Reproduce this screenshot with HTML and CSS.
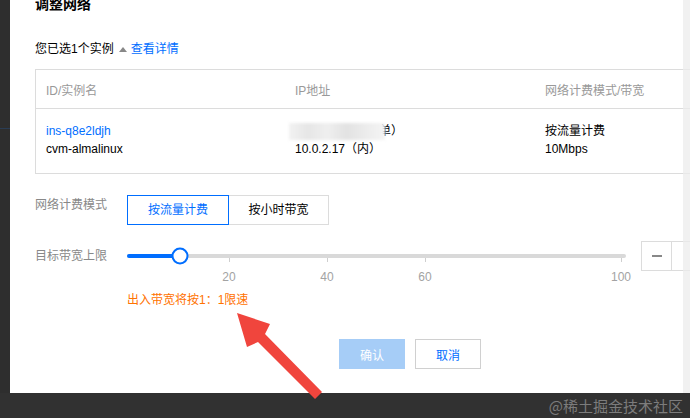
FILE: index.html
```html
<!DOCTYPE html>
<html lang="zh-CN">
<head>
<meta charset="utf-8">
<title>调整网络</title>
<link rel="stylesheet" href="styles.css">
</head>
<body>
<div class="page">
  <div class="main">
    <div class="side"><div class="side-line"></div></div>
    <div class="dialog">
      <h2 class="title">调整网络</h2>
      <div class="selected">您已选1个实例 <svg class="caret" width="8" height="6" viewBox="0 0 8 6"><path d="M0 6 L4 1 L8 6 Z" fill="#888"/></svg> <a class="link">查看详情</a></div>
      <div class="tbl">
        <div class="tr thead">
          <div class="td">ID/实例名</div>
          <div class="td">IP地址</div>
          <div class="td">网络计费模式/带宽</div>
        </div>
        <div class="tr tbody">
          <div class="td"><div class="link">ins-q8e2ldjh</div><div>cvm-almalinux</div></div>
          <div class="td"><div class="ipline"><span class="blur"></span><span class="half">单</span>）</div><div>10.0.2.17（内）</div></div>
          <div class="td"><div>按流量计费</div><div>10Mbps</div></div>
        </div>
      </div>
      <div class="form">
        <div class="frow top">
          <div class="label">网络计费模式</div>
          <div class="seg">
            <div class="seg-btn active">按流量计费</div>
            <div class="seg-btn">按小时带宽</div>
          </div>
        </div>
        <div class="frow mid">
          <div class="label">目标带宽上限</div>
          <div class="slider">
            <div class="track"><div class="fill"></div></div>
            <div class="scale">
              <span class="tick" style="left:20%"></span>
              <span class="tick" style="left:40%"></span>
              <span class="tick" style="left:60%"></span>
              <span class="tick" style="left:100%"></span>
              <span class="mark" style="left:20%">20</span>
              <span class="mark" style="left:40%">40</span>
              <span class="mark" style="left:60%">60</span>
              <span class="mark" style="left:100%">100</span>
              <span class="handle" style="left:10%"></span>
            </div>
          </div>
          <div class="num">
            <div class="num-btn"><span class="minus"></span></div>
            <div class="num-input"></div>
          </div>
        </div>
        <div class="warn">出入带宽将按1：1限速</div>
      </div>
      <div class="footer">
        <button class="btn primary">确认</button>
        <button class="btn">取消</button>
      </div>
    </div>
  </div>
  <div class="bottom"><span class="watermark">@稀土掘金技术社区</span></div>
  <div class="edge"></div>
  <svg class="arrow" width="690" height="418" viewBox="0 0 690 418">
    <polygon points="237,313 270,324 265,334 322,392 315,399 258,342 247,347" fill="#f0453d"/>
  </svg>
</div>
</body>
</html>
```
FILE: styles.css
```css
* { box-sizing: border-box; }
html, body { margin: 0; padding: 0; }
body {
  width: 690px;
  height: 418px;
  overflow: hidden;
  background: #313131;
  font-family: "Liberation Sans", "Noto Sans CJK SC", sans-serif;
  font-size: 12px;
  color: #000;
}
.page {
  position: relative;
  width: 690px;
  height: 418px;
  display: flex;
  flex-direction: column;
  overflow: hidden;
}
.main {
  display: flex;
  height: 393px;
  flex: none;
}
.side {
  width: 10px;
  flex: none;
  background: #2e2e2e;
  padding-top: 128px;
}
.side-line {
  height: 1px;
  background: #2a3d55;
}
.dialog {
  width: 800px;
  flex: none;
  background: #fff;
  padding-left: 25px;
  overflow: hidden;
}
.title {
  margin: -6px 0 0;
  font-size: 14px;
  font-weight: bold;
  line-height: 20px;
  color: #000;
}
.selected {
  margin-top: 25px;
  line-height: 20px;
  color: #000;
  display: flex;
  align-items: center;
  gap: 3px;
}
.caret { margin: 0 1px 0 2px; }
.link { color: #006eff; }
.tbl {
  margin-top: 10px;
  width: 720px;
  border: 1px solid #dcdcdc;
}
.tr {
  display: grid;
  grid-template-columns: 249px 250px 1fr;
}
.thead {
  height: 39px;
  align-items: center;
  border-bottom: 1px solid #dcdcdc;
  color: #999;
}
.tbody {
  height: 64px;
  padding-top: 13px;
  line-height: 18px;
}
.td { padding-left: 10px; }
.ipline { display: flex; align-items: center; height: 18px; }
.blur {
  display: inline-block;
  width: 96px;
  height: 17px;
  margin-left: -6px;
  background: linear-gradient(90deg, #f2f2f2 0%, #e6e6e6 20%, #efefef 40%, #e2e2e2 60%, #ececec 80%, #f4f4f4 100%);
  filter: blur(1.5px);
  position: relative;
  z-index: 1;
}
.half { margin-left: -6px; }
.form { margin-top: 21px; }
.frow {
  display: grid;
  grid-template-columns: 92px auto auto;
  justify-content: start;
}
.frow.top { align-items: start; }
.frow.mid { align-items: center; margin-top: 16px; height: 30px; }
.label { color: #888; line-height: 20px; }
.seg { display: flex; }
.seg-btn {
  height: 30px;
  line-height: 28px;
  text-align: center;
  border: 1px solid #dcdcdc;
  width: 101px;
  margin-left: -1px;
  color: #000;
}
.seg-btn.active {
  width: 102px;
  margin-left: 0;
  border-color: #006eff;
  color: #006eff;
  position: relative;
  z-index: 1;
}
.slider {
  position: relative;
  width: 499px;
  height: 30px;
}
.track {
  margin-top: 13px;
  height: 4px;
  background: #d9d9d9;
  border-radius: 2px;
  overflow: hidden;
}
.fill { width: 53px; height: 4px; background: #006eff; }
.scale {
  position: absolute;
  left: 4px;
  right: 5px;
  top: 0;
  bottom: 0;
}
.tick {
  position: absolute;
  top: 17px;
  width: 1px;
  height: 4px;
  background: #cfcfcf;
}
.mark {
  position: absolute;
  top: 28px;
  line-height: 16px;
  transform: translateX(-50%);
  color: #a3a3a3;
}
.handle {
  position: absolute;
  top: 15px;
  width: 17px;
  height: 17px;
  border: 2px solid #006eff;
  border-radius: 50%;
  background: #fff;
  transform: translate(-50%, -50%);
}
.num {
  margin-left: 15px;
  display: flex;
  height: 30px;
  border: 1px solid #dcdcdc;
}
.num-btn {
  width: 30px;
  border-right: 1px solid #dcdcdc;
  display: flex;
  align-items: center;
  justify-content: center;
}
.minus { width: 10px; height: 2px; background: #888; }
.num-input { width: 60px; }
.warn {
  margin-top: 19px;
  margin-left: 92px;
  line-height: 20px;
  color: #ff7200;
}
.footer {
  margin-top: 29px;
  margin-left: 304px;
  display: flex;
  gap: 10px;
}
.btn {
  width: 66px;
  height: 30px;
  border: 1px solid #d0d0d0;
  background: #fff;
  color: #006eff;
  font-family: inherit;
  font-size: 12px;
  padding: 0;
}
.btn.primary {
  border-color: #a6cdf7;
  background: #a6cdf7;
  color: #fff;
}
.bottom {
  flex: 1;
  background: #313131;
  display: flex;
  align-items: center;
  justify-content: flex-end;
  padding-right: 7px;
}
.watermark {
  color: #7c7c7c;
  font-size: 15px;
  line-height: 18px;
  font-family: "Noto Sans CJK SC", sans-serif;
}
.edge {
  position: absolute;
  right: 0;
  top: 0;
  width: 7px;
  height: 393px;
  background: rgba(236, 236, 236, 0.75);
}
.arrow {
  position: absolute;
  left: 0;
  top: 0;
  pointer-events: none;
}
```
